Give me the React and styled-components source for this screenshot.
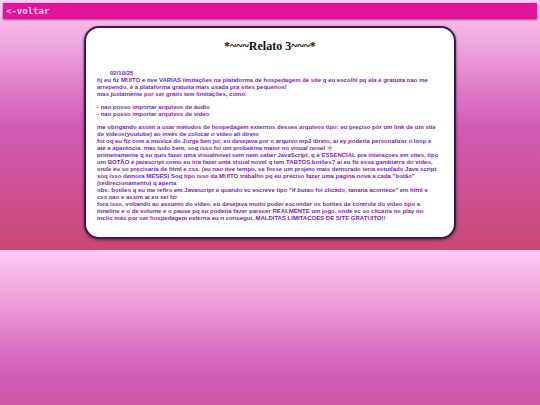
import React from "react";
import styled, { createGlobalStyle } from "styled-components";

const GlobalStyle = createGlobalStyle`
  *, *::before, *::after {
    box-sizing: border-box;
  }

  html {
    background: linear-gradient(to bottom, #ffcef1 0%, #d05bb7 50%, #cb4871 100%);
  }

  body {
    margin: 0;
  }
`;

const Page = styled.div`
  display: flex;
  flex-direction: column;
  gap: 7px;
  padding: 3px 3px 11px;
`;

const NavBar = styled.nav`
  display: flex;
  align-items: center;
  padding: 3px;
  background: #e3149b;
  box-shadow: 0 1px 2px rgba(60, 20, 70, 0.6);
`;

const BackLink = styled.a`
  color: #ffcef1;
  font: bold 9px/10px "DejaVu Sans Mono", monospace;
  text-decoration: none;
`;

const Card = styled.main`
  width: 70%;
  max-width: 372px;
  margin: 0 auto;
  padding: 10px 11px 15px;
  background: #fff;
  border: 2px solid #3a1b4d;
  border-radius: 15px;
  box-shadow: 0 1px 3px rgba(50, 15, 70, 0.7);
`;

const Title = styled.h1`
  margin: 0 0 16px;
  color: #111;
  font: bold 12px/16px "Liberation Serif", serif;
  text-align: center;
`;

const Entry = styled.article`
  padding-right: 4px;
  color: #7c1fa5;
  font: bold 6px/7px "Liberation Sans", sans-serif;
`;

const EntryDate = styled.time`
  display: block;
  padding-left: 13px;
`;

const Paragraph = styled.p`
  margin: 0 0 ${({ $spaced }) => ($spaced ? "6px" : "0")};
`;

const SkullIcon = styled.svg`
  width: 6px;
  height: 6px;
  vertical-align: -1px;
`;

function Skull() {
  return (
    <SkullIcon viewBox="0 0 12 12" role="img" aria-label="caveira">
      <path
        d="M6 1C3.2 1 1.6 2.8 1.6 5.2c0 1.6.7 2.4 1.6 3V10c0 .6.4 1 1 1h3.6c.6 0 1-.4 1-1V8.2c.9-.6 1.6-1.4 1.6-3C10.4 2.8 8.8 1 6 1Z"
        fill="#e4e8e8"
        stroke="#a7adb3"
        strokeWidth=".7"
      />
      <circle cx="4.1" cy="5.7" r="1.3" fill="#40404a" />
      <circle cx="7.9" cy="5.7" r="1.3" fill="#40404a" />
      <path d="m6 7-.7 1.2h1.4ZM5 9.5V11M7 9.5V11" fill="#40404a" stroke="#777" strokeWidth=".5" />
    </SkullIcon>
  );
}

export default function App() {
  return (
    <>
      <GlobalStyle />
      <Page>
        <NavBar>
          <BackLink href="#voltar">&lt;-voltar</BackLink>
        </NavBar>
        <Card>
          <Title>*~~~Relato 3~~~*</Title>
          <Entry>
            <EntryDate dateTime="2025-10-02">02/10/25</EntryDate>
            <Paragraph $spaced>
              hj eu fiz MUITO e tive VARIAS limitações na plataforma de hospedagem de site q eu escolhi pq ela é
              gratuita nao me arrependo, é a plataforma gratuita mais usada pra sites pequenos!
              <br />
              mas justamente por ser grátis tem limitações, como:
            </Paragraph>
            <Paragraph $spaced>
              - nao posso importar arquivos de áudio
              <br />- nao posso importar arquivos de vídeo
            </Paragraph>
            <Paragraph>
              me obrigando assim a usar métodos de hospedagem externos desses arquivos tipo: eu preciso pôr um link
              de um site de vídeos(youtube) ao invés de colocar o vídeo ali direto
            </Paragraph>
            <Paragraph>
              foi oq eu fiz com a música do Jorge ben jor, eu desejava por o arquivo mp3 direto, ai ey poderia
              personalizar o loop e até a aparência. mas tudo bem, soq isso foi um probekma maior no visual
              novel <Skull />
            </Paragraph>
            <Paragraph>
              primeiramente q eu quis fazer uma visualnovel sem nem saber JavaScript, q é ESSENCIAL pra interacoes em
              sites, tipo um BOTÃO é javascript como eu iria fazer uma visual novel q tem TABTOS botões? ai eu fiz
              essa gambiarra do vídeo, onde eu so precisaria de html e css. (eu nao tive tempo, se fosse um projeto
              mais demorado teria estudado Java script soq isso demora MESES) Soq tipo isso da MUITO trabalho pq eu
              preciso fazer uma pagina nova a cada "botão" (redirecionamento) q aperta
            </Paragraph>
            <Paragraph>
              obs: botões q eu me refiro em Javascript é quando vc escreve tipo "if butao foi clicado, tanana
              acontece" em html e
              <br />
              css nao e assim ai eu sei fzr
            </Paragraph>
            <Paragraph>
              fora isso, voltando ao assunto do vídeo, eu desejava muito poder esconder os botões de controle do vídeo
              tipo a
              <br />
              timeline e o de volume e o pause pq eu poderia fazer parecer REALMENTE um jogo, onde vc so clicaria no
              play no
              <br />
              inciio mas por ser hospedagem externa eu n consegui. MALDITAS LIMITACOES DE SITE GRATUITO!!
            </Paragraph>
          </Entry>
        </Card>
      </Page>
    </>
  );
}
